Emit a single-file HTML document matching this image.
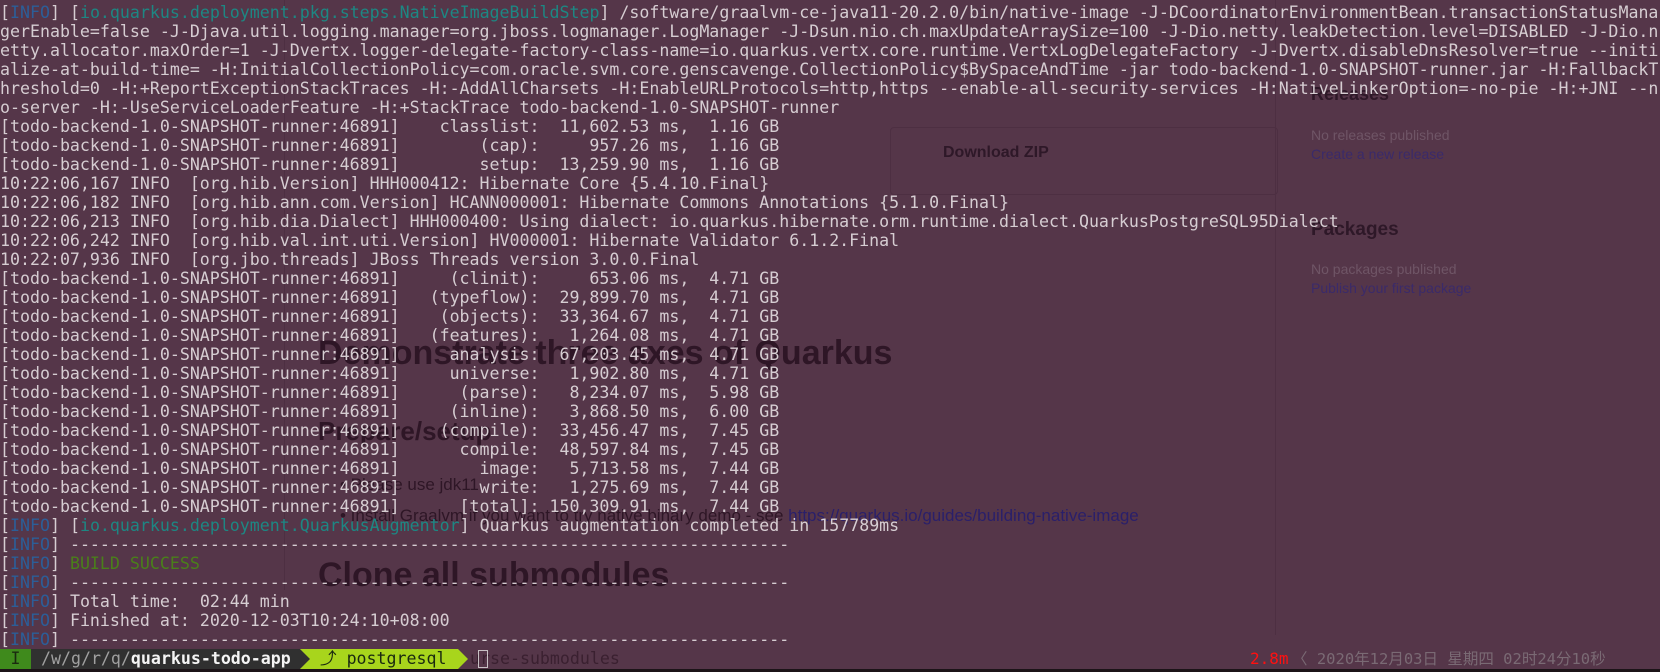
<!DOCTYPE html>
<html><head><meta charset="utf-8"><style>
html,body{margin:0;padding:0;width:1660px;height:672px;overflow:hidden;background:#553649;}
.bg{position:absolute;font-family:"Liberation Sans",sans-serif;color:#3a1f30;white-space:nowrap;}
.t{position:absolute;left:0;top:3px;margin:0;font-family:"DejaVu Sans Mono","Liberation Mono",monospace;font-size:16.6px;letter-spacing:0;line-height:19px;color:#d6cdd2;white-space:pre;}
.i{color:#2c5e98}.c{color:#1d8783}.g{color:#4a7f1a}
.sb{position:absolute;top:649px;height:20px;font-family:"DejaVu Sans Mono","Liberation Mono",monospace;font-size:16.6px;line-height:20px;white-space:pre;}
</style></head><body>
<div class="bg" style="left:890px;top:127px;width:386px;height:66px;border:1px solid #4d2f42;border-radius:4px;"></div>
<div class="bg" style="left:943px;top:144px;font-size:16px;font-weight:bold;color:#2e1828;">Download ZIP</div>
<div class="bg" style="left:1311px;top:84px;font-size:18px;font-weight:bold;color:#2e1828;">Releases</div>
<div class="bg" style="left:1311px;top:127px;font-size:14px;color:#6f5566;">No releases published</div>
<div class="bg" style="left:1311px;top:146px;font-size:14px;color:#3a2a6a;">Create a new release</div>
<div class="bg" style="left:1311px;top:219px;font-size:19px;font-weight:bold;color:#2e1828;">Packages</div>
<div class="bg" style="left:1311px;top:261px;font-size:14px;color:#6f5566;">No packages published</div>
<div class="bg" style="left:1311px;top:280px;font-size:14px;color:#3a2a6a;">Publish your first package</div>
<div class="bg" style="left:318px;top:334px;font-size:34px;font-weight:bold;color:#2e1626;">Demonstrate three axes of Quarkus</div>
<div class="bg" style="left:318px;top:416px;font-size:26px;font-weight:bold;color:#2e1626;">Prepare/setup</div>
<div class="bg" style="left:340px;top:475px;font-size:17px;color:#2e1626;">• Please use jdk11</div>
<div class="bg" style="left:340px;top:506px;font-size:17px;color:#2e1626;">• Install Graalvm if you want to try native binary demo - see <span style="color:#2a1f6a">https://quarkus.io/guides/building-native-image</span></div>
<div class="bg" style="left:318px;top:556px;font-size:34px;font-weight:bold;color:#2e1626;">Clone all submodules</div>
<div class="bg" style="left:1275px;top:0;width:1px;height:635px;background:#4d2f42;"></div>
<div class="bg" style="left:284px;top:0;width:1px;height:590px;background:#4d2f42;"></div>
<pre class="t">[<span class="i">INFO</span>] [<span class="c">io.quarkus.deployment.pkg.steps.NativeImageBuildStep</span>] /software/graalvm-ce-java11-20.2.0/bin/native-image -J-DCoordinatorEnvironmentBean.transactionStatusMana
gerEnable=false -J-Djava.util.logging.manager=org.jboss.logmanager.LogManager -J-Dsun.nio.ch.maxUpdateArraySize=100 -J-Dio.netty.leakDetection.level=DISABLED -J-Dio.n
etty.allocator.maxOrder=1 -J-Dvertx.logger-delegate-factory-class-name=io.quarkus.vertx.core.runtime.VertxLogDelegateFactory -J-Dvertx.disableDnsResolver=true --initi
alize-at-build-time= -H:InitialCollectionPolicy=com.oracle.svm.core.genscavenge.CollectionPolicy$BySpaceAndTime -jar todo-backend-1.0-SNAPSHOT-runner.jar -H:FallbackT
hreshold=0 -H:+ReportExceptionStackTraces -H:-AddAllCharsets -H:EnableURLProtocols=http,https --enable-all-security-services -H:NativeLinkerOption=-no-pie -H:+JNI --n
o-server -H:-UseServiceLoaderFeature -H:+StackTrace todo-backend-1.0-SNAPSHOT-runner
[todo-backend-1.0-SNAPSHOT-runner:46891]    classlist:  11,602.53 ms,  1.16 GB
[todo-backend-1.0-SNAPSHOT-runner:46891]        (cap):     957.26 ms,  1.16 GB
[todo-backend-1.0-SNAPSHOT-runner:46891]        setup:  13,259.90 ms,  1.16 GB
10:22:06,167 INFO  [org.hib.Version] HHH000412: Hibernate Core {5.4.10.Final}
10:22:06,182 INFO  [org.hib.ann.com.Version] HCANN000001: Hibernate Commons Annotations {5.1.0.Final}
10:22:06,213 INFO  [org.hib.dia.Dialect] HHH000400: Using dialect: io.quarkus.hibernate.orm.runtime.dialect.QuarkusPostgreSQL95Dialect
10:22:06,242 INFO  [org.hib.val.int.uti.Version] HV000001: Hibernate Validator 6.1.2.Final
10:22:07,936 INFO  [org.jbo.threads] JBoss Threads version 3.0.0.Final
[todo-backend-1.0-SNAPSHOT-runner:46891]     (clinit):     653.06 ms,  4.71 GB
[todo-backend-1.0-SNAPSHOT-runner:46891]   (typeflow):  29,899.70 ms,  4.71 GB
[todo-backend-1.0-SNAPSHOT-runner:46891]    (objects):  33,364.67 ms,  4.71 GB
[todo-backend-1.0-SNAPSHOT-runner:46891]   (features):   1,264.08 ms,  4.71 GB
[todo-backend-1.0-SNAPSHOT-runner:46891]     analysis:  67,203.45 ms,  4.71 GB
[todo-backend-1.0-SNAPSHOT-runner:46891]     universe:   1,902.80 ms,  4.71 GB
[todo-backend-1.0-SNAPSHOT-runner:46891]      (parse):   8,234.07 ms,  5.98 GB
[todo-backend-1.0-SNAPSHOT-runner:46891]     (inline):   3,868.50 ms,  6.00 GB
[todo-backend-1.0-SNAPSHOT-runner:46891]    (compile):  33,456.47 ms,  7.45 GB
[todo-backend-1.0-SNAPSHOT-runner:46891]      compile:  48,597.84 ms,  7.45 GB
[todo-backend-1.0-SNAPSHOT-runner:46891]        image:   5,713.58 ms,  7.44 GB
[todo-backend-1.0-SNAPSHOT-runner:46891]        write:   1,275.69 ms,  7.44 GB
[todo-backend-1.0-SNAPSHOT-runner:46891]      [total]: 150,309.91 ms,  7.44 GB
[<span class="i">INFO</span>] [<span class="c">io.quarkus.deployment.QuarkusAugmentor</span>] Quarkus augmentation completed in 157789ms
[<span class="i">INFO</span>] ------------------------------------------------------------------------
[<span class="i">INFO</span>] <span class="g">BUILD SUCCESS</span>
[<span class="i">INFO</span>] ------------------------------------------------------------------------
[<span class="i">INFO</span>] Total time:  02:44 min
[<span class="i">INFO</span>] Finished at: 2020-12-03T10:24:10+08:00
[<span class="i">INFO</span>] ------------------------------------------------------------------------</pre>
<div class="sb" style="left:0;width:31px;background:#3f8a1c;color:#1a2a10;text-align:center;">I</div>
<div class="sb" style="left:31px;width:269px;background:#303030;color:#a0a0a0;"> /w/g/r/q/<b style="color:#f4f4f4">quarkus-todo-app</b></div>
<svg style="position:absolute;left:300px;top:649px" width="12" height="20"><polygon points="0,0 10,10 0,20" fill="#303030"/></svg>
<div class="sb" style="left:300px;width:158px;background:#a8d51c;color:#1a2a10;clip-path:polygon(0 0,100% 0,100% 100%,0 100%,10px 50%);">  ⤴ postgresql</div>
<svg style="position:absolute;left:458px;top:649px" width="12" height="20"><polygon points="0,0 10,10 0,20" fill="#a8d51c"/></svg>
<div class="sb" style="left:470px;color:#3a2030;">urse-submodules</div>
<div style="position:absolute;left:478px;top:650px;width:10px;height:18px;border:1px solid #c8c0c4;box-sizing:border-box;"></div>
<div class="sb" style="left:1250px;font-size:16px;color:#ff1010;">2.8m</div>
<div class="sb" style="left:1292px;font-family:'DejaVu Sans Mono','Noto Sans CJK SC',monospace;font-size:15.5px;color:#7a6a74;">〈 2020年12月03日 星期四 02时24分10秒</div>
<div style="position:absolute;left:0;top:669px;width:1660px;height:3px;background:#1c1418;"></div>
</body></html>
